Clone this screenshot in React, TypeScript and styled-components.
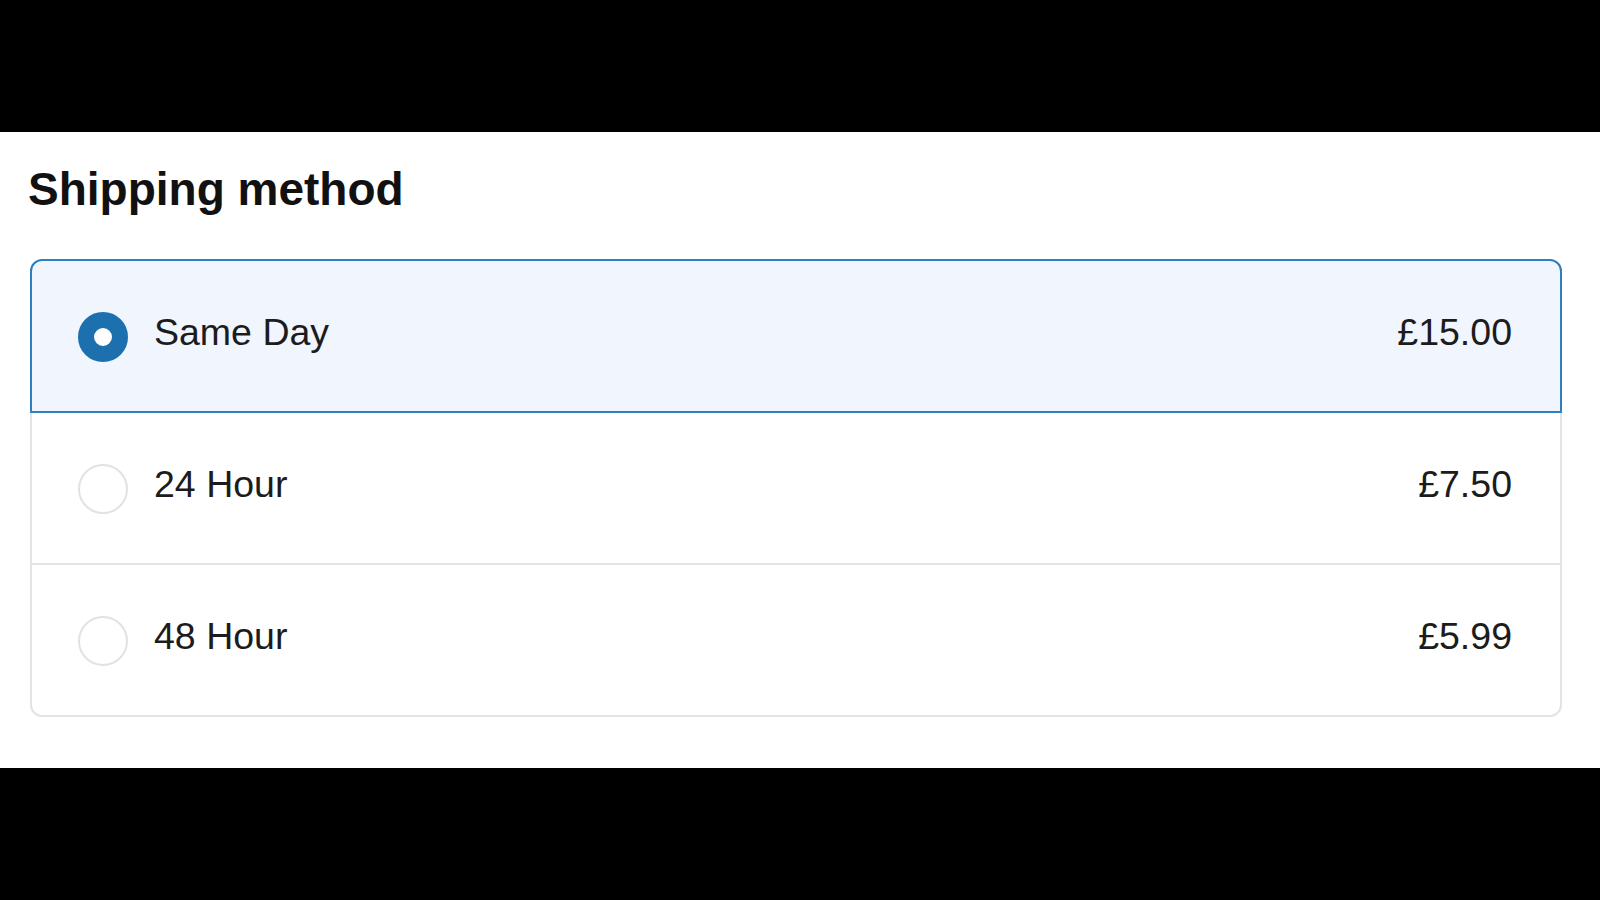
import React, { useState } from 'react'
import styled, { createGlobalStyle, css } from 'styled-components'

const GlobalStyle = createGlobalStyle`
  html, body {
    margin: 0;
    padding: 0;
    background: #000;
  }
  body {
    font-family: 'Liberation Sans', Arial, sans-serif;
  }
`

const Panel = styled.section`
  margin-top: 132px;
  background: #fff;
  padding: 31px 38px 50px 30px;
  box-sizing: border-box;
  height: 636px;
`

const Heading = styled.h2`
  margin: 0 0 43px -2px;
  font-size: 46px;
  line-height: 53px;
  font-weight: 700;
  color: #111;
`

const Options = styled.div`
  display: flex;
  flex-direction: column;
`

const Row = styled.label<{ $selected?: boolean }>`
  position: relative;
  display: flex;
  align-items: center;
  gap: 26px;
  height: 154px;
  box-sizing: border-box;
  padding: 2px 48px 0 46px;
  border: 2px solid #e3e3e3;
  background: #fff;
  cursor: pointer;
  font-size: 37.5px;
  color: #1c1c1c;

  & + & {
    margin-top: -2px;
  }
  &:first-child {
    border-radius: 12px 12px 0 0;
  }
  &:last-child {
    border-radius: 0 0 12px 12px;
  }

  ${(p) =>
    p.$selected &&
    css`
      z-index: 1;
      border-color: #2f7fbf;
      background: #f0f5fe;
    `}
`

const Radio = styled.span<{ $checked?: boolean }>`
  flex: none;
  width: 50px;
  height: 50px;
  box-sizing: border-box;
  border-radius: 50%;
  background: #fff;
  border: 2px solid #e2e2e2;

  ${(p) =>
    p.$checked &&
    css`
      border: 16px solid #1b70ad;
    `}
`

const Name = styled.span`
  flex: 1;
  padding-bottom: 10px;
`

const Price = styled.span`
  flex: none;
  padding-bottom: 10px;
`

const methods = [
  { id: 'same-day', name: 'Same Day', price: '£15.00' },
  { id: '24h', name: '24 Hour', price: '£7.50' },
  { id: '48h', name: '48 Hour', price: '£5.99' },
]

export default function App() {
  const [selected, setSelected] = useState('same-day')

  return (
    <>
      <GlobalStyle />
      <Panel>
        <Heading>Shipping method</Heading>
        <Options role="radiogroup">
          {methods.map((m) => (
            <Row key={m.id} $selected={selected === m.id} onClick={() => setSelected(m.id)}>
              <Radio $checked={selected === m.id} role="radio" aria-checked={selected === m.id} />
              <Name>{m.name}</Name>
              <Price>{m.price}</Price>
            </Row>
          ))}
        </Options>
      </Panel>
    </>
  )
}
